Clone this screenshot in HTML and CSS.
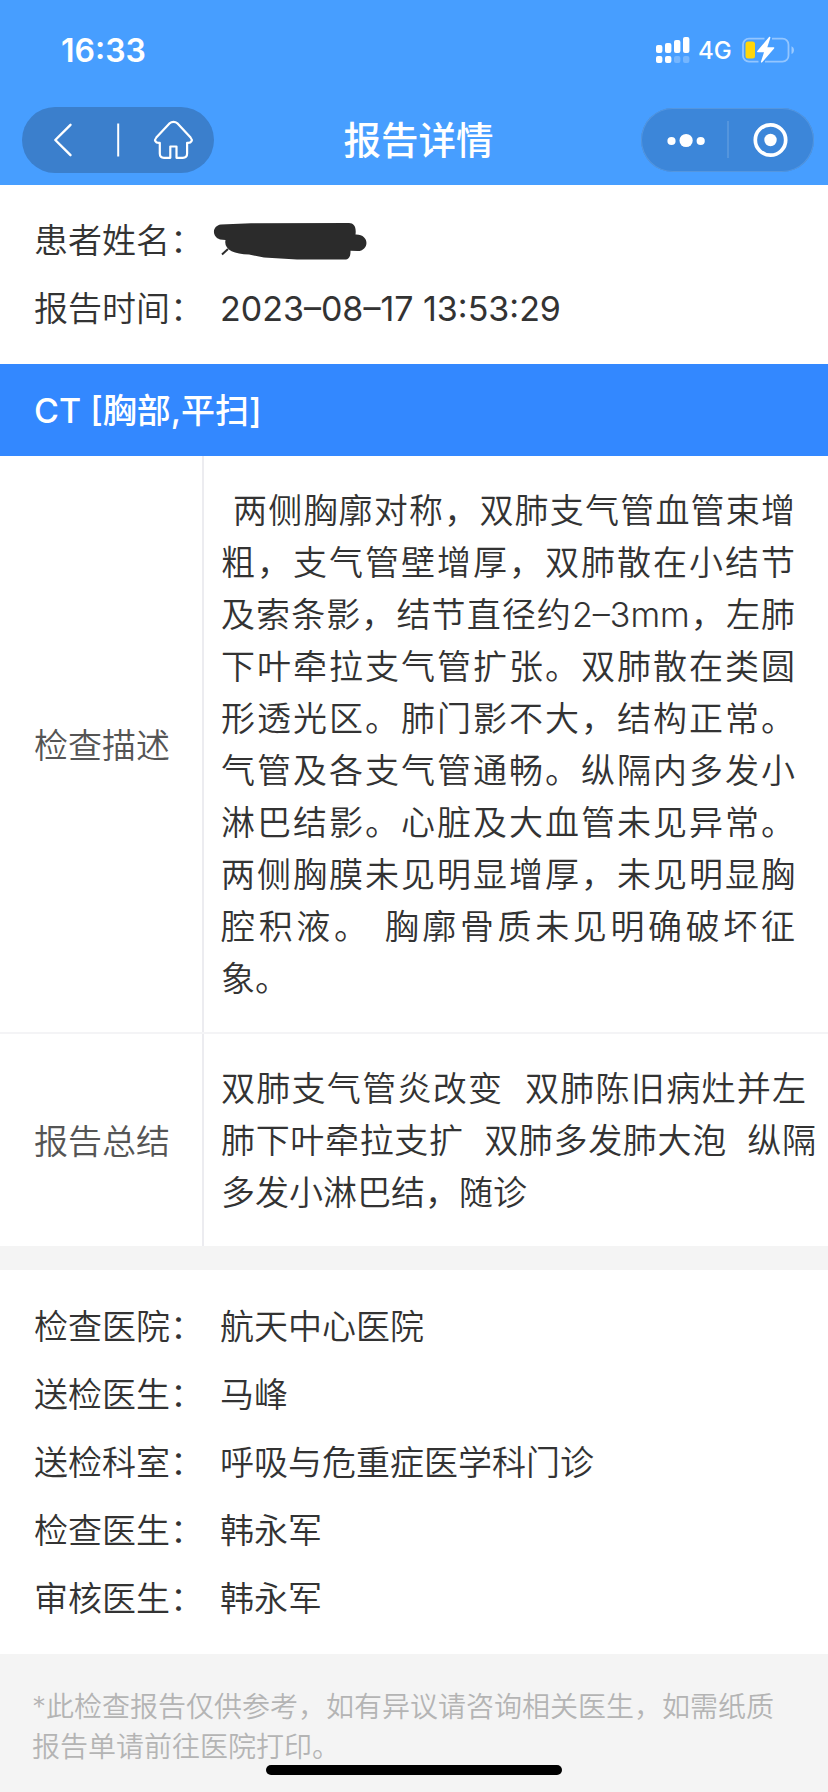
FILE: index.html
```html
<!DOCTYPE html>
<html lang="zh-CN">
<head>
    <meta charset="UTF-8">
    <meta name="viewport" content="width=device-width, initial-scale=1.0">
    <title>报告详情</title>
    <link rel="stylesheet" href="styles.css">
</head>
<body>
    <header class="header">
        <div class="status-bar">
            <span class="time">16:33</span>
            <div class="status-icons">
                <svg class="signal" width="34" height="27" viewBox="0 0 34 27" fill="#fff">
                    <rect x="0" y="9" width="6.4" height="8" rx="2"/>
                    <rect x="9" y="7" width="6.4" height="10" rx="2"/>
                    <rect x="18" y="4" width="6.4" height="13" rx="2"/>
                    <rect x="27" y="1" width="6.4" height="16" rx="2"/>
                    <rect x="0" y="20" width="6.4" height="7" rx="2"/>
                    <rect x="9" y="20" width="6.4" height="7" rx="2"/>
                    <rect x="18" y="20" width="6.4" height="7" rx="2" opacity=".25"/>
                    <rect x="27" y="20" width="6.4" height="7" rx="2" opacity=".25"/>
                </svg>
                <span class="network">4G</span>
                <svg class="battery" width="54" height="28" viewBox="0 0 54 28">
                    <path d="M23.500 2.700H8a6 6 0 0 0-6 6v11a6 6 0 0 0 6 6h9.500M31 2.700h10.500a6 6 0 0 1 6 6v11a6 6 0 0 1-6 6H24" fill="none" stroke="#fff" stroke-opacity=".42" stroke-width="1.800"/>
                    <path d="M50.500 10.300c3.300 1.200 3.300 6.600 0 7.800z" fill="#fff" fill-opacity=".45"/>
                    <rect x="4.500" y="5.500" width="9.500" height="17" rx="2.500" fill="#ffd60a"/>
                    <path d="M27.800 1.300 16.300 15.100q-.7 1 .5 1.100h6.200l-3 9.300c-.4 1.200.7 1.500 1.400.6l11.700-13.600q.7-1-.5-1.200h-6.300l3-9.300c.4-1.200-.7-1.600-1.500-.7z" fill="#fff"/>
                </svg>
            </div>
        </div>
        <nav class="nav-bar">
            <div class="nav-left">
                <svg width="192" height="66" viewBox="0 0 192 66" fill="none" stroke="#fff" stroke-width="2.400" stroke-linecap="round" stroke-linejoin="round">
                    <path d="M48.500 17.800 33.300 33l15.200 15.200"/>
                    <path d="M96.200 16.500v33" stroke-width="2" stroke-linecap="butt"/>
                    <path d="M147.200 16.700q4.300-3.500 8.600 0l12.800 13.900c2.400 2.800.8 5.300-2.500 5.300h-1v10.600q0 4.300-4.300 4.300h-6.300V39.500h-6.200v11.300H142q-4.200 0-4.200-4.300V35.900h-1c-3.400 0-4.900-2.500-2.500-5.300z" stroke-width="2.200"/>
                </svg>
            </div>
            <h1>报告详情</h1>
            <div class="nav-right">
                <svg width="173" height="64" viewBox="0 0 173 64" fill="#fff">
                    <circle cx="30.500" cy="33" r="4.100"/>
                    <circle cx="45.100" cy="32.500" r="6.600"/>
                    <circle cx="59.700" cy="33" r="4.100"/>
                    <rect x="86.500" y="13" width="1" height="37" opacity=".25"/>
                    <circle cx="129.500" cy="32" r="15.200" fill="none" stroke="#fff" stroke-width="3.700"/>
                    <circle cx="129.500" cy="32" r="6.200"/>
                </svg>
            </div>
        </nav>
    </header>

    <section class="info">
        <div class="info-row">
            <span class="label">患者姓名：</span>
            <svg class="scribble" width="156" height="40" viewBox="0 0 156 40">
                <path d="M8 1.500 38 .3 136 0c5 0 7.500 4 6.500 11.500 14.500-.5 14 16.500 2 16.500l-7-.2c.2 5.500-1.500 9.200-6.500 8.700H84L51 34.500l-15-3C20 31.500 10.500 26 12.500 17L7 16.500C-1.500 14-1 2.500 8 1.500z" fill="#2b2b2b"/>
                <path d="M9 31.500 15 26" stroke="#2b2b2b" stroke-width="2"/>
            </svg>
        </div>
        <div class="info-row">
            <span class="label">报告时间：</span>
            <span class="value date">2023–08–17 13:53:29</span>
        </div>
    </section>

    <h2 class="section-title">CT [胸部,平扫]</h2>

    <div class="report">
        <div class="report-row">
            <div class="report-label">检查描述</div>
            <div class="report-content description">
                <p class="indent">两侧胸廓对称，双肺支气管血管束增</p>
                <p>粗，支气管壁增厚，双肺散在小结节</p>
                <p>及索条影，结节直径约2–3mm，左肺</p>
                <p>下叶牵拉支气管扩张。双肺散在类圆</p>
                <p>形透光区。肺门影不大，结构正常。</p>
                <p>气管及各支气管通畅。纵隔内多发小</p>
                <p>淋巴结影。心脏及大血管未见异常。</p>
                <p>两侧胸膜未见明显增厚，未见明显胸</p>
                <p>腔积液。 胸廓骨质未见明确破坏征</p>
                <p class="last">象。</p>
            </div>
        </div>
        <div class="report-row">
            <div class="report-label">报告总结</div>
            <div class="report-content summary">
                <p class="short">双肺支气管炎改变&nbsp; 双肺陈旧病灶并左</p>
                <p>肺下叶牵拉支扩&nbsp; 双肺多发肺大泡&nbsp; 纵隔</p>
                <p class="last">多发小淋巴结，随诊</p>
            </div>
        </div>
    </div>

    <section class="info hospital">
        <div class="info-row">
            <span class="label">检查医院：</span>
            <span class="value">航天中心医院</span>
        </div>
        <div class="info-row">
            <span class="label">送检医生：</span>
            <span class="value">马峰</span>
        </div>
        <div class="info-row">
            <span class="label">送检科室：</span>
            <span class="value">呼吸与危重症医学科门诊</span>
        </div>
        <div class="info-row">
            <span class="label">检查医生：</span>
            <span class="value">韩永军</span>
        </div>
        <div class="info-row">
            <span class="label">审核医生：</span>
            <span class="value">韩永军</span>
        </div>
    </section>

    <footer class="footer">
        <p>*此检查报告仅供参考，如有异议请咨询相关医生，如需纸质<br>报告单请前往医院打印。</p>
    </footer>
    <div class="home-indicator"></div>
</body>
</html>
```
FILE: styles.css
```css
* {
    box-sizing: border-box;
}
body {
    margin: 0;
    width: 828px;
    height: 1792px;
    overflow: hidden;
    background-color: #f4f4f4;
    color: #333333;
    font-family: Inter, "Noto Sans CJK SC", sans-serif;
    font-size: 34px;
    font-weight: 350;
}
h1, h2, p {
    margin: 0;
}
svg {
    display: block;
}
.header {
    height: 185px;
    background-color: #479eff;
    color: #ffffff;
}
.status-bar {
    display: flex;
    justify-content: space-between;
    height: 107px;
    padding: 31px 33px 0 61px;
}
.time {
    font-size: 32px;
    font-weight: 600;
    line-height: 40px;
}
.status-icons {
    display: flex;
    align-items: flex-start;
    padding-top: 5px;
}
.network {
    width: 33px;
    margin: 1px 10px 0 8px;
    font-size: 24px;
    font-weight: 500;
    line-height: 28px;
}
.nav-bar {
    display: flex;
    justify-content: space-between;
    align-items: center;
    height: 66px;
    padding: 0 14px 0 22px;
}
.nav-left {
    width: 192px;
    height: 66px;
    border-radius: 33px;
    background-color: #3b7fcc;
}
.nav-bar h1 {
    margin-left: -18px;
    padding-top: 2px;
    font-size: 37.5px;
    font-weight: 500;
    line-height: 66px;
}
.nav-right {
    width: 173px;
    height: 64px;
    border-radius: 32px;
    background-color: #3c86d9;
    box-shadow: inset 0 0 0 1px #5496df;
}
.info {
    height: 179px;
    padding: 22px 34px;
    background-color: #ffffff;
}
.info-row {
    display: flex;
    height: 68px;
    line-height: 68px;
}
.label {
    width: 186px;
}
.date {
    font-weight: 400;
}
.scribble {
    margin: 16px 0 0 -7px;
}
.section-title {
    height: 92px;
    padding-left: 34px;
    background-color: #3388ff;
    color: #ffffff;
    font-size: 34px;
    font-weight: 500;
    line-height: 93px;
}
.report {
    background-color: #ffffff;
}
.report-row {
    display: flex;
    height: 212px;
}
.report-row:first-child {
    height: 578px;
    border-bottom: 2px solid #f4f4f6;
}
.report-label {
    display: flex;
    align-items: center;
    width: 204px;
    padding: 0 0 2px 34px;
    border-right: 2px solid #ececf0;
    color: #555555;
}
.report-content {
    padding: 29px 0 0 17px;
    line-height: 52px;
    white-space: nowrap;
}
.report-content p {
    text-align: justify;
    text-align-last: justify;
}
.report-content p.last {
    text-align-last: left;
}
.description {
    width: 591px;
}
.description .indent {
    padding-left: 12px;
}
.summary {
    width: 612px;
}
.summary .short {
    width: 585px;
}
.hospital {
    height: 384px;
    margin-top: 24px;
    padding-top: 23px;
}
.footer {
    padding: 33px 32px 0;
    color: #b4b4b4;
    font-size: 28px;
    line-height: 40px;
}
.home-indicator {
    position: absolute;
    left: 266px;
    top: 1765px;
    width: 296px;
    height: 10px;
    border-radius: 5px;
    background-color: #000000;
}
```
